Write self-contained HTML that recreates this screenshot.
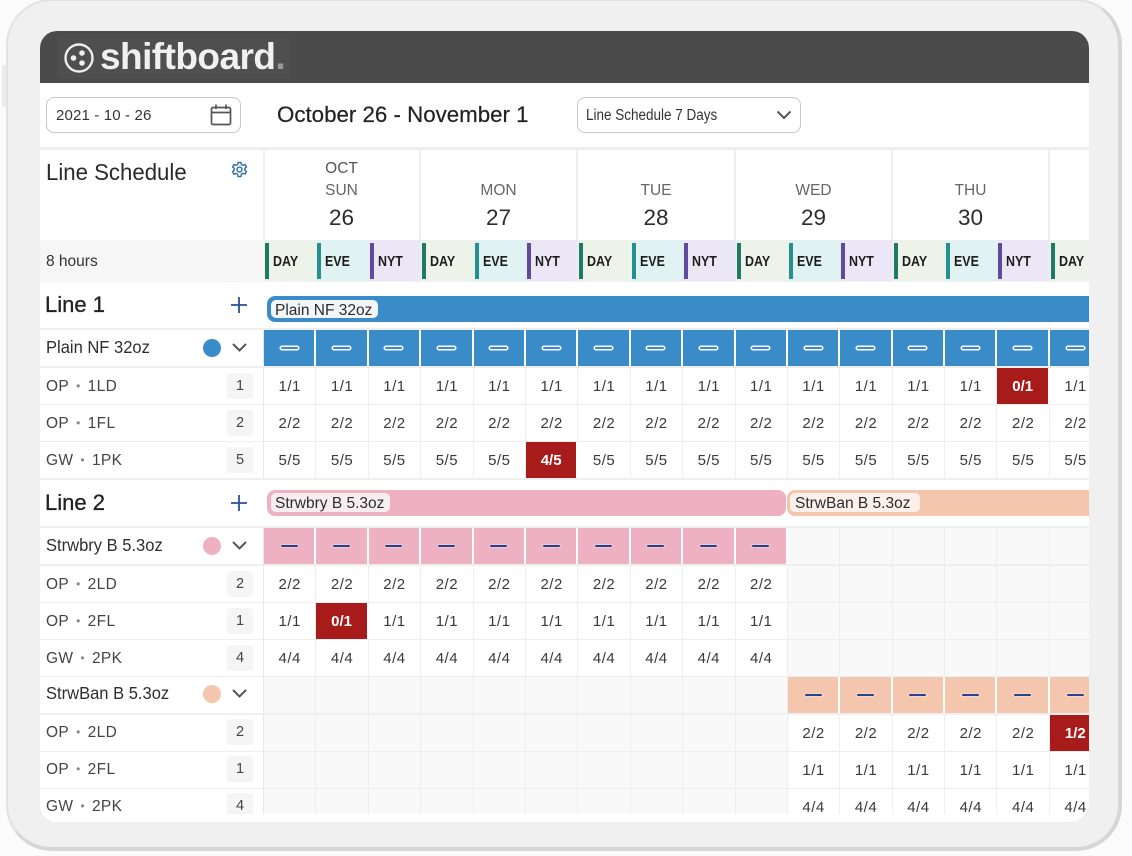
<!DOCTYPE html>
<html><head><meta charset="utf-8">
<style>
html,body{margin:0;padding:0;width:1132px;height:856px;overflow:hidden;background:#fbfbfb;font-family:"Liberation Sans",sans-serif;color:#2c2c2c}
.a{position:absolute}
#frame{left:6px;top:-1px;width:1110px;height:846px;background:#f0f0f0;border:2px solid #e2e2e2;border-bottom:4px solid #d6d6d6;border-right:4px solid #d6d6d6;border-radius:46px;box-sizing:content-box}
#screen{left:40px;top:31px;width:1049px;height:791px;overflow:hidden;background:#fff;border-radius:17px 17px 20px 17px}
#in{left:-40px;top:-31px;width:1132px;height:856px}
#tb{left:0;top:0;width:1132px;height:814px;overflow:hidden}
.r{position:absolute;left:264px;display:grid;grid-template-columns:repeat(16,52.4px);height:37px}
.r i{font-style:normal;display:flex;align-items:center;justify-content:center;font-size:15px;letter-spacing:.5px;color:#3a3a3a;border-right:1px solid #eee;box-sizing:border-box;height:100%}
.r i.x{background:#f9f9f9}
.r i.red{background:#a81b1b;background-clip:padding-box;color:#fff;font-weight:bold;letter-spacing:0;border-right:2px solid #fff}
.d{height:36px}
.d i{border-right:2px solid #fff}
.d i::after{content:"";width:17px;height:2px;border-radius:2px;background:#27408f;box-shadow:0 0 0 1px rgba(255,255,255,.3)}
.d.b i{background:#3a8cc8}.d.b i::after{background:#3a8cc8;box-shadow:0 0 0 1.5px #fff;height:2px}
.d.p i{background:#edb1c1}
.d.o i{background:#f4c6ad}
.d i.x{background:#f9f9f9;border-right:1px solid #eee}
.d i.x::after{display:none}
.hl{position:absolute;left:40px;width:1049px;height:2px;background:#efefef}
.hs{position:absolute;left:40px;width:1049px;height:1px;background:#eee}
.vl{position:absolute;left:263px;width:1px;background:#e8e8e8}
.lbl{position:absolute;left:46px;font-size:15.5px;letter-spacing:.35px;color:#444;white-space:nowrap;line-height:20px;transform:translateY(1px)}
.lbl em{font-style:normal;color:#888;font-size:12px;margin:0 7px 0 7px;position:relative;top:-1px}
.n{position:absolute;left:227px;width:26px;height:26px;background:#f5f5f5;border-radius:3px;font-size:14.5px;color:#444;text-align:center;line-height:26px}
.nm{position:absolute;left:46px;font-size:17.5px;color:#2e2e2e;white-space:nowrap;line-height:22px;transform:scaleX(.945);transform-origin:0 50%}
.ln{position:absolute;left:45px;font-size:22px;color:#222;line-height:26px;font-weight:normal;-webkit-text-stroke:.3px #222}
.plus{position:absolute;left:231px;width:16px;height:16px}
.dot{position:absolute;left:203px;width:18px;height:18px;border-radius:50%}
.chev{position:absolute;left:232px;width:15px;height:9px}
.bar{position:absolute;height:26px;top:0}
.tag{position:absolute;left:4px;top:3px;height:19px;line-height:21px;padding:0 6px 0 4px;background:#f3f6f8;border-radius:5px;font-size:15.5px;color:#2c2c2c;white-space:nowrap}
.dh{position:absolute;top:150px;width:157px;height:90px;text-align:center;border-right:2px solid #eee;box-sizing:border-box}
.dh .w{position:absolute;left:0;right:0;top:32px;font-size:15.5px;line-height:18px;color:#666}
.dh .m{position:absolute;left:0;right:0;top:10px;font-size:15.5px;line-height:18px;color:#555}
.dh .t{position:absolute;left:0;right:0;top:55px;font-size:22.5px;line-height:26px;color:#2c2c2c}
.sh{position:absolute;left:264px;top:240px;display:grid;grid-template-columns:repeat(16,52.4px);height:41px}
.sh i{font-style:normal;position:relative;display:block;height:41px}
.sh i::before{content:"";position:absolute;left:1px;top:3px;width:4px;height:36px}
.sh b{position:absolute;left:9px;top:13px;font-size:15px;line-height:17px;color:#1d1d1d;display:inline-block;transform:scaleX(.83);transform-origin:0 50%}
.sh .D{background:#eef3ea}.sh .D::before{background:#1f7a63}
.sh .E{background:#e0f2f1}.sh .E::before{background:#26908f}
.sh .N{background:#ece7f7}.sh .N::before{background:#5e4b9b}
</style></head><body>
<div class="a" style="left:2px;top:65px;width:5px;height:42px;background:#ececec"></div>
<div class="a" id="frame"></div>
<div class="a" id="screen"><div class="a" id="in">

<div class="a" style="left:40px;top:31px;width:1049px;height:52px;background:#4b4b4b"></div>
<div class="a" style="left:58px;top:38px;width:232px;height:40px;background:#4f4f4f"></div>
<svg class="a" style="left:63px;top:42px" width="32" height="32" viewBox="0 0 32 32"><circle cx="16" cy="16" r="13.5" fill="none" stroke="#eee" stroke-width="2.4"/><circle cx="10.500" cy="16" r="2.800" fill="#eee"/><circle cx="19" cy="11" r="2.800" fill="#eee"/><circle cx="19" cy="21" r="2.800" fill="#eee"/></svg>
<div class="a" style="left:100px;top:35px;font-size:37px;line-height:44px;font-weight:bold;color:#f0f0f0;white-space:nowrap;letter-spacing:-.55px">shiftboard<span style="color:#999">.</span></div>

<div class="a" style="left:46px;top:97px;width:195px;height:36px;border:1px solid #c9c9c9;border-radius:8px;box-sizing:border-box"></div>
<div class="a" style="left:56px;top:105px;font-size:15px;line-height:20px;letter-spacing:.15px;color:#333;white-space:nowrap;transform:translateY(1px)">2021 - 10 - 26</div>
<svg class="a" style="left:209px;top:103px" width="24" height="24" viewBox="0 0 24 24" fill="none" stroke="#555" stroke-width="1.7"><rect x="2.500" y="4.500" width="19" height="17" rx="1.500"/><path d="M2.500 9.500H21.500M7 1.500V6M17 1.500V6"/></svg>
<div class="a" style="left:277px;top:101px;font-size:22.300px;line-height:28px;color:#222;white-space:nowrap;-webkit-text-stroke:.2px #222">October 26 - November 1</div>
<div class="a" style="left:577px;top:97px;width:224px;height:36px;border:1px solid #c9c9c9;border-radius:8px;box-sizing:border-box"></div>
<div class="a" style="left:586px;top:106px;font-size:15.500px;line-height:20px;color:#333;white-space:nowrap;transform:scaleX(.87);transform-origin:0 50%">Line Schedule 7 Days</div>
<svg class="a" style="left:776px;top:110px" width="16" height="10" viewBox="0 0 16 10" fill="none" stroke="#555" stroke-width="2"><path d="M1.500 1.500L8 8L14.500 1.500"/></svg>

<div class="a" style="left:40px;top:147px;width:1049px;height:3px;background:#eee"></div>

<div class="a" style="left:46px;top:158px;font-size:23px;line-height:28px;color:#2a2a2a;white-space:nowrap;transform:scaleX(.965);transform-origin:0 50%">Line Schedule</div>
<svg class="a" style="left:231px;top:161px" width="17" height="17" viewBox="0 0 24 24" fill="none" stroke="#2f6fa8" stroke-width="2"><path d="M10 2h4l.6 3 2.400 1.200 2.800-1.200 2 3.400-2.300 2 .1 2.800 2.200 1.800-2 3.400-2.800-1-2.400 1.300L14 22h-4l-.6-3.200L7 17.500l-2.800 1-2-3.400 2.300-1.900V10.400L2.200 8.400l2-3.400L7 6.200 9.400 5z"/><circle cx="12" cy="12" r="3.500"/></svg>

<div class="dh" style="left:264px"><div class="m">OCT</div><div class="w">SUN</div><div class="t">26</div></div>
<div class="dh" style="left:421px"><div class="w">MON</div><div class="t">27</div></div>
<div class="dh" style="left:578.500px"><div class="w">TUE</div><div class="t">28</div></div>
<div class="dh" style="left:736px"><div class="w">WED</div><div class="t">29</div></div>
<div class="dh" style="left:893px"><div class="w">THU</div><div class="t">30</div></div>
<div class="vl" style="top:150px;height:90px;width:2px;background:#eee"></div>

<div class="a" style="left:40px;top:240px;width:224px;height:41px;background:#f6f6f6"></div>
<div class="a" style="left:46px;top:253px;font-size:15.500px;line-height:17px;color:#333">8 hours</div>
<div class="sh"><i class="D"><b>DAY</b></i><i class="E"><b>EVE</b></i><i class="N"><b>NYT</b></i><i class="D"><b>DAY</b></i><i class="E"><b>EVE</b></i><i class="N"><b>NYT</b></i><i class="D"><b>DAY</b></i><i class="E"><b>EVE</b></i><i class="N"><b>NYT</b></i><i class="D"><b>DAY</b></i><i class="E"><b>EVE</b></i><i class="N"><b>NYT</b></i><i class="D"><b>DAY</b></i><i class="E"><b>EVE</b></i><i class="N"><b>NYT</b></i><i class="D"><b>DAY</b></i></div>
<div class="hs" style="top:281px;background:#f1f1f1"></div>

<div id="tb" class="a">
<div class="vl" style="top:330px;height:150px"></div>
<div class="vl" style="top:528px;height:290px"></div>

<div class="ln" style="top:292px">Line 1</div>
<svg class="plus" style="top:297px" viewBox="0 0 16 16" stroke="#2a4f9a" stroke-width="1.800"><path d="M8 0V16M0 8H16"/></svg>
<div class="bar" style="left:267px;top:296px;width:830px;background:#3a8cc8;border-radius:8px 0 0 8px"><div class="tag" style="top:4px;height:18px">Plain NF 32oz</div></div>
<div class="hl" style="top:328px"></div>
<div class="nm" style="top:336px">Plain NF 32oz</div>
<div class="dot" style="top:339px;background:#3a8cc8"></div>
<svg class="chev" style="top:343px" viewBox="0 0 15 9" fill="none" stroke="#555" stroke-width="2"><path d="M1 1L7.500 7.500L14 1"/></svg>
<div class="r d b" style="top:330px"><i></i><i></i><i></i><i></i><i></i><i></i><i></i><i></i><i></i><i></i><i></i><i></i><i></i><i></i><i></i><i></i></div>
<div class="hl" style="top:366px"></div>

<div class="lbl" style="top:376px">OP<em>•</em>1LD</div><div class="n" style="top:373px">1</div>
<div class="r" style="top:368px"><i>1/1</i><i>1/1</i><i>1/1</i><i>1/1</i><i>1/1</i><i>1/1</i><i>1/1</i><i>1/1</i><i>1/1</i><i>1/1</i><i>1/1</i><i>1/1</i><i>1/1</i><i>1/1</i><i class="red">0/1</i><i>1/1</i></div>
<div class="hs" style="top:404px"></div>
<div class="lbl" style="top:413px">OP<em>•</em>1FL</div><div class="n" style="top:410px">2</div>
<div class="r" style="top:405px"><i>2/2</i><i>2/2</i><i>2/2</i><i>2/2</i><i>2/2</i><i>2/2</i><i>2/2</i><i>2/2</i><i>2/2</i><i>2/2</i><i>2/2</i><i>2/2</i><i>2/2</i><i>2/2</i><i>2/2</i><i>2/2</i></div>
<div class="hs" style="top:441px"></div>
<div class="lbl" style="top:450px">GW<em>•</em>1PK</div><div class="n" style="top:447px">5</div>
<div class="r" style="top:442px"><i>5/5</i><i>5/5</i><i>5/5</i><i>5/5</i><i>5/5</i><i class="red">4/5</i><i>5/5</i><i>5/5</i><i>5/5</i><i>5/5</i><i>5/5</i><i>5/5</i><i>5/5</i><i>5/5</i><i>5/5</i><i>5/5</i></div>
<div class="hl" style="top:478px"></div>

<div class="ln" style="top:490px">Line 2</div>
<svg class="plus" style="top:495px" viewBox="0 0 16 16" stroke="#2a4f9a" stroke-width="1.800"><path d="M8 0V16M0 8H16"/></svg>
<div class="bar" style="left:267px;top:490px;width:519px;background:#edb1c1;border-radius:8px"><div class="tag" style="background:#f8eef1">Strwbry B 5.3oz</div></div>
<div class="bar" style="left:787px;top:490px;width:310px;background:#f4c6ad;border-radius:8px 0 0 8px"><div class="tag" style="left:3px;background:#fbf1ea;padding:0 10px 0 5px">StrwBan B 5.3oz</div></div>
<div class="hl" style="top:526px"></div>
<div class="nm" style="top:534px">Strwbry B 5.3oz</div>
<div class="dot" style="top:537px;background:#edb1c1"></div>
<svg class="chev" style="top:541px" viewBox="0 0 15 9" fill="none" stroke="#555" stroke-width="2"><path d="M1 1L7.500 7.500L14 1"/></svg>
<div class="r d p" style="top:528px"><i></i><i></i><i></i><i></i><i></i><i></i><i></i><i></i><i></i><i></i><i class="x"></i><i class="x"></i><i class="x"></i><i class="x"></i><i class="x"></i><i class="x"></i></div>
<div class="hl" style="top:564px"></div>

<div class="lbl" style="top:574px">OP<em>•</em>2LD</div><div class="n" style="top:571px">2</div>
<div class="r" style="top:566px"><i>2/2</i><i>2/2</i><i>2/2</i><i>2/2</i><i>2/2</i><i>2/2</i><i>2/2</i><i>2/2</i><i>2/2</i><i>2/2</i><i class="x"></i><i class="x"></i><i class="x"></i><i class="x"></i><i class="x"></i><i class="x"></i></div>
<div class="hs" style="top:602px"></div>
<div class="lbl" style="top:611px">OP<em>•</em>2FL</div><div class="n" style="top:608px">1</div>
<div class="r" style="top:603px"><i>1/1</i><i class="red">0/1</i><i>1/1</i><i>1/1</i><i>1/1</i><i>1/1</i><i>1/1</i><i>1/1</i><i>1/1</i><i>1/1</i><i class="x"></i><i class="x"></i><i class="x"></i><i class="x"></i><i class="x"></i><i class="x"></i></div>
<div class="hs" style="top:639px"></div>
<div class="lbl" style="top:648px">GW<em>•</em>2PK</div><div class="n" style="top:645px">4</div>
<div class="r" style="top:640px"><i>4/4</i><i>4/4</i><i>4/4</i><i>4/4</i><i>4/4</i><i>4/4</i><i>4/4</i><i>4/4</i><i>4/4</i><i>4/4</i><i class="x"></i><i class="x"></i><i class="x"></i><i class="x"></i><i class="x"></i><i class="x"></i></div>
<div class="hs" style="top:676px"></div>

<div class="nm" style="top:682px">StrwBan B 5.3oz</div>
<div class="dot" style="top:685px;background:#f4c6ad"></div>
<svg class="chev" style="top:689px" viewBox="0 0 15 9" fill="none" stroke="#555" stroke-width="2"><path d="M1 1L7.500 7.500L14 1"/></svg>
<div class="r d o" style="top:677px"><i class="x"></i><i class="x"></i><i class="x"></i><i class="x"></i><i class="x"></i><i class="x"></i><i class="x"></i><i class="x"></i><i class="x"></i><i class="x"></i><i></i><i></i><i></i><i></i><i></i><i></i></div>
<div class="hl" style="top:713px"></div>

<div class="lbl" style="top:722px">OP<em>•</em>2LD</div><div class="n" style="top:719px">2</div>
<div class="r" style="top:715px"><i class="x"></i><i class="x"></i><i class="x"></i><i class="x"></i><i class="x"></i><i class="x"></i><i class="x"></i><i class="x"></i><i class="x"></i><i class="x"></i><i>2/2</i><i>2/2</i><i>2/2</i><i>2/2</i><i>2/2</i><i class="red" style="justify-content:flex-start;padding-left:15px">1/2</i></div>
<div class="hs" style="top:751px"></div>
<div class="lbl" style="top:759px">OP<em>•</em>2FL</div><div class="n" style="top:756px">1</div>
<div class="r" style="top:752px"><i class="x"></i><i class="x"></i><i class="x"></i><i class="x"></i><i class="x"></i><i class="x"></i><i class="x"></i><i class="x"></i><i class="x"></i><i class="x"></i><i>1/1</i><i>1/1</i><i>1/1</i><i>1/1</i><i>1/1</i><i>1/1</i></div>
<div class="hs" style="top:788px"></div>
<div class="lbl" style="top:796px">GW<em>•</em>2PK</div><div class="n" style="top:793px">4</div>
<div class="r" style="top:789px"><i class="x"></i><i class="x"></i><i class="x"></i><i class="x"></i><i class="x"></i><i class="x"></i><i class="x"></i><i class="x"></i><i class="x"></i><i class="x"></i><i>4/4</i><i>4/4</i><i>4/4</i><i>4/4</i><i>4/4</i><i>4/4</i></div>
</div>

</div></div>
</body></html>
